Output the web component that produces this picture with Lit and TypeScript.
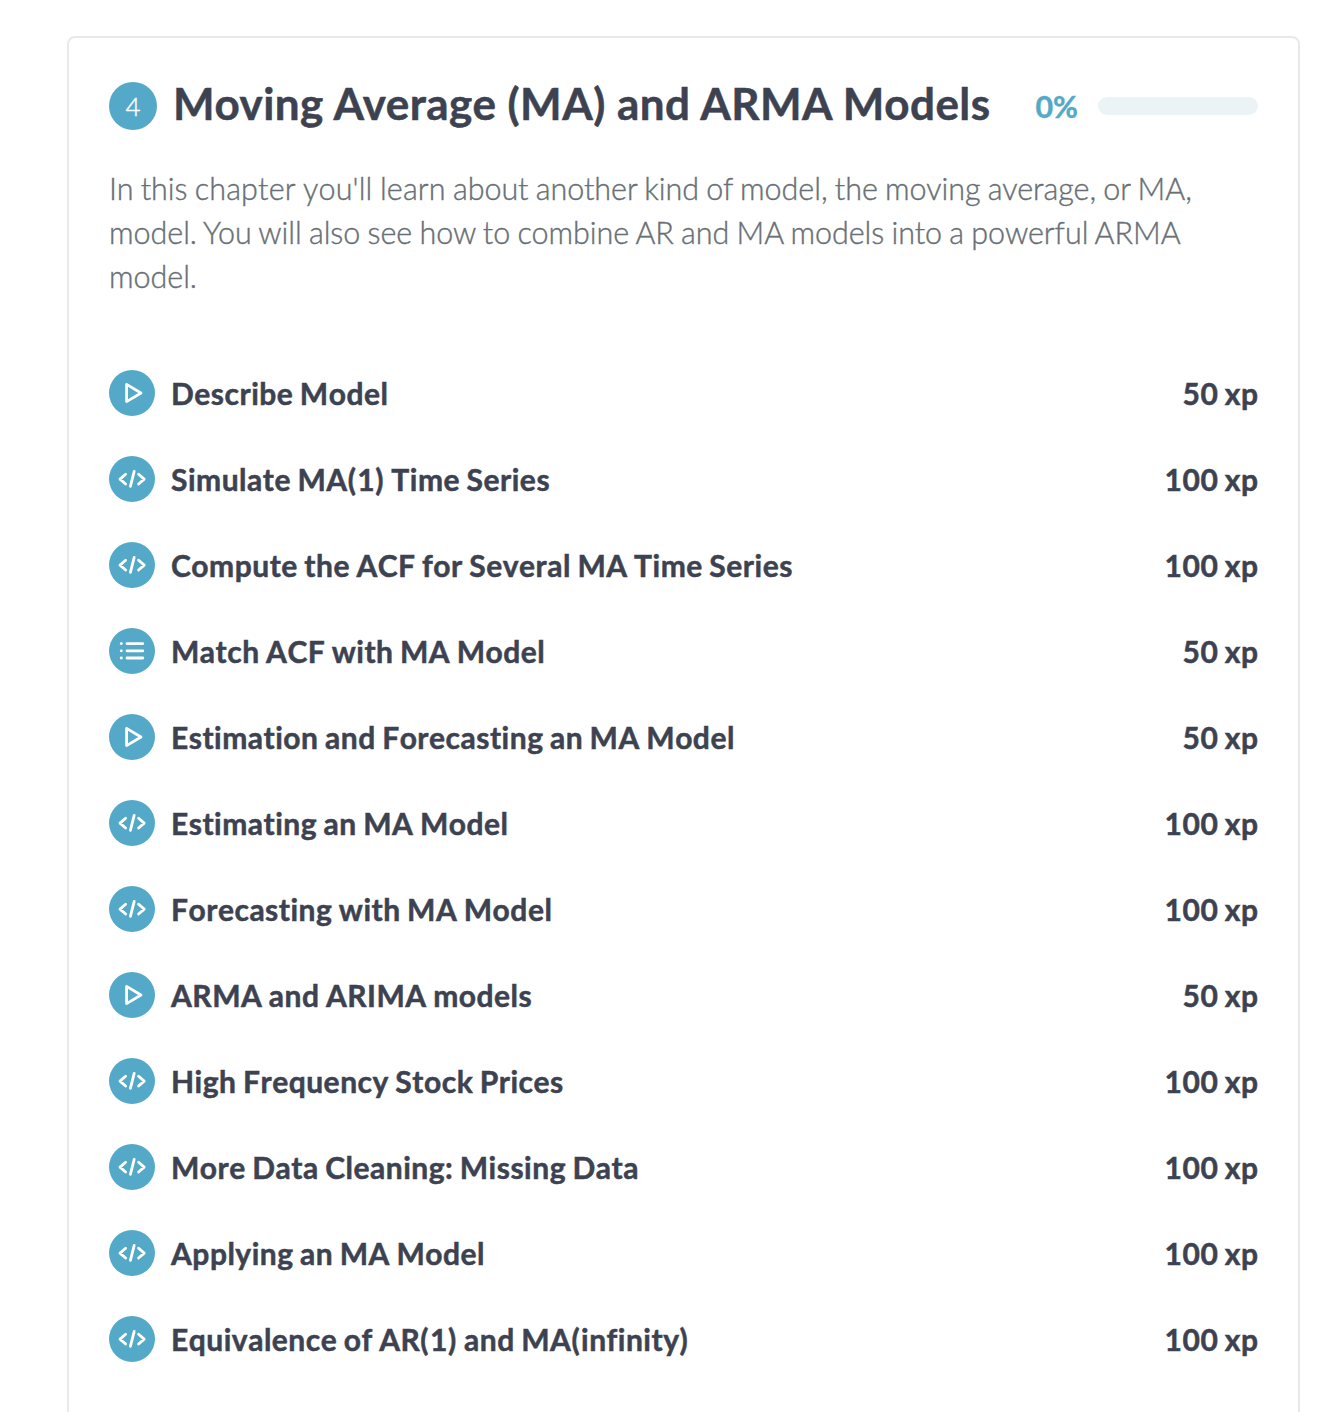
import { LitElement, html, css, svg } from "lit";
import { customElement } from "lit/decorators.js";

type Kind = "video" | "code" | "list";

const exercises: { kind: Kind; title: string; xp: number }[] = [
  { kind: "video", title: "Describe Model", xp: 50 },
  { kind: "code", title: "Simulate MA(1) Time Series", xp: 100 },
  { kind: "code", title: "Compute the ACF for Several MA Time Series", xp: 100 },
  { kind: "list", title: "Match ACF with MA Model", xp: 50 },
  { kind: "video", title: "Estimation and Forecasting an MA Model", xp: 50 },
  { kind: "code", title: "Estimating an MA Model", xp: 100 },
  { kind: "code", title: "Forecasting with MA Model", xp: 100 },
  { kind: "video", title: "ARMA and ARIMA models", xp: 50 },
  { kind: "code", title: "High Frequency Stock Prices", xp: 100 },
  { kind: "code", title: "More Data Cleaning: Missing Data", xp: 100 },
  { kind: "code", title: "Applying an MA Model", xp: 100 },
  { kind: "code", title: "Equivalence of AR(1) and MA(infinity)", xp: 100 },
];

// Parentheses get a little extra tracking so they do not crowd their neighbours.
const spaced = (title: string) =>
  title.split(/([()])/).map((part) => (/[()]/.test(part) ? html`<span class="paren">${part}</span>` : part));

const glyphs = {
  video: svg`<path d="M17.6 14.4V31.6L32 23z"/>`,
  code: svg`<path d="M16.6 18.2l-5.6 4.9 5.6 4.9M29.6 18.2l5.6 4.9-5.6 4.9M25.2 15.4l-3.8 15"/>`,
  list: svg`<path d="M18 15.6h15.8M18 22.8h15.8M18 30h15.8M12.2 15.6h.2M12.2 22.8h.2M12.2 30h.2"/>`,
};

@customElement("app-root")
export class AppRoot extends LitElement {
  static styles = css`
    :host {
      display: block;
      box-sizing: border-box;
      height: 1412px;
      padding: 36px 38px 0 67px;
      overflow: hidden;
      background: #fff;
      color: #3d4251;
      font-family: Lato, sans-serif;
    }
    .card {
      box-sizing: border-box;
      height: 1440px;
      padding: 40px 40px 0;
      border: 2px solid #e6eaea;
      border-radius: 8px;
    }
    .head {
      display: flex;
      align-items: center;
      height: 56px;
    }
    .number {
      width: 48px;
      height: 48px;
      border-radius: 50%;
      background: #54a9c9;
      color: #fff;
      font-size: 26px;
      font-weight: 300;
      line-height: 48px;
      text-align: center;
      -webkit-text-stroke: 0.4px #fff;
    }
    .title {
      flex: 1;
      margin: -6px 0 0 16px;
      font-size: 44px;
      line-height: 56px;
      font-weight: 700;
      letter-spacing: 0.48px;
      -webkit-text-stroke: 0.5px currentColor;
      white-space: nowrap;
    }
    .percent {
      margin-right: 20px;
      color: #54a9c9;
      font-size: 30.4px;
      font-weight: 700;
      -webkit-text-stroke: 0.4px currentColor;
    }
    .bar {
      width: 160px;
      height: 18px;
      border-radius: 9px;
      background: #ebf3f7;
    }
    .about {
      margin: 32px 0 0;
      color: #686f75;
      font-size: 30.5px;
      font-weight: 300;
      line-height: 44px;
      word-spacing: -1px;
      letter-spacing: -0.035px;
      -webkit-text-stroke: 0.4px currentColor;
      white-space: nowrap;
    }
    .loose {
      font-kerning: none;
      letter-spacing: 0.15px;
    }
    .list {
      margin: 52px 0 0;
      padding: 0;
      list-style: none;
    }
    .row {
      display: flex;
      align-items: center;
      height: 86px;
      font-size: 30px;
      font-weight: 700;
      letter-spacing: 0.5px;
      word-spacing: -1.3px;
      font-kerning: none;
      -webkit-text-stroke: 0.5px currentColor;
    }
    .paren {
      letter-spacing: 1.4px;
    }
    .icon {
      width: 46px;
      height: 46px;
      margin-right: 16px;
      fill: none;
      stroke: #fff;
      stroke-width: 2.8;
      stroke-linecap: round;
      stroke-linejoin: round;
    }
    .disc {
      fill: #54a9c9;
      stroke: none;
    }
    .name {
      flex: 1;
    }
    .xp {
      margin-right: -0.5px;
    }
  `;

  render() {
    return html`
      <section class="card">
        <header class="head">
          <span class="number">4</span>
          <h2 class="title">Moving Average (MA) and ARMA Models</h2>
          <span class="percent">0%</span>
          <div class="bar"></div>
        </header>
        <p class="about">
          In this <span class="loose">chapter you'll learn</span> about another kind of model, the moving average, or MA,<br />
          model. You will also see how to combine AR and MA models into a powerful ARMA<br />
          model.
        </p>
        <ul class="list">
          ${exercises.map(
            (e) => html`<li class="row">
              <svg class="icon" viewBox="0 0 46 46"><circle class="disc" cx="23" cy="23" r="23" />${glyphs[e.kind]}</svg>
              <span class="name">${spaced(e.title)}</span>
              <span class="xp">${e.xp} xp</span>
            </li>`
          )}
        </ul>
      </section>
    `;
  }
}
